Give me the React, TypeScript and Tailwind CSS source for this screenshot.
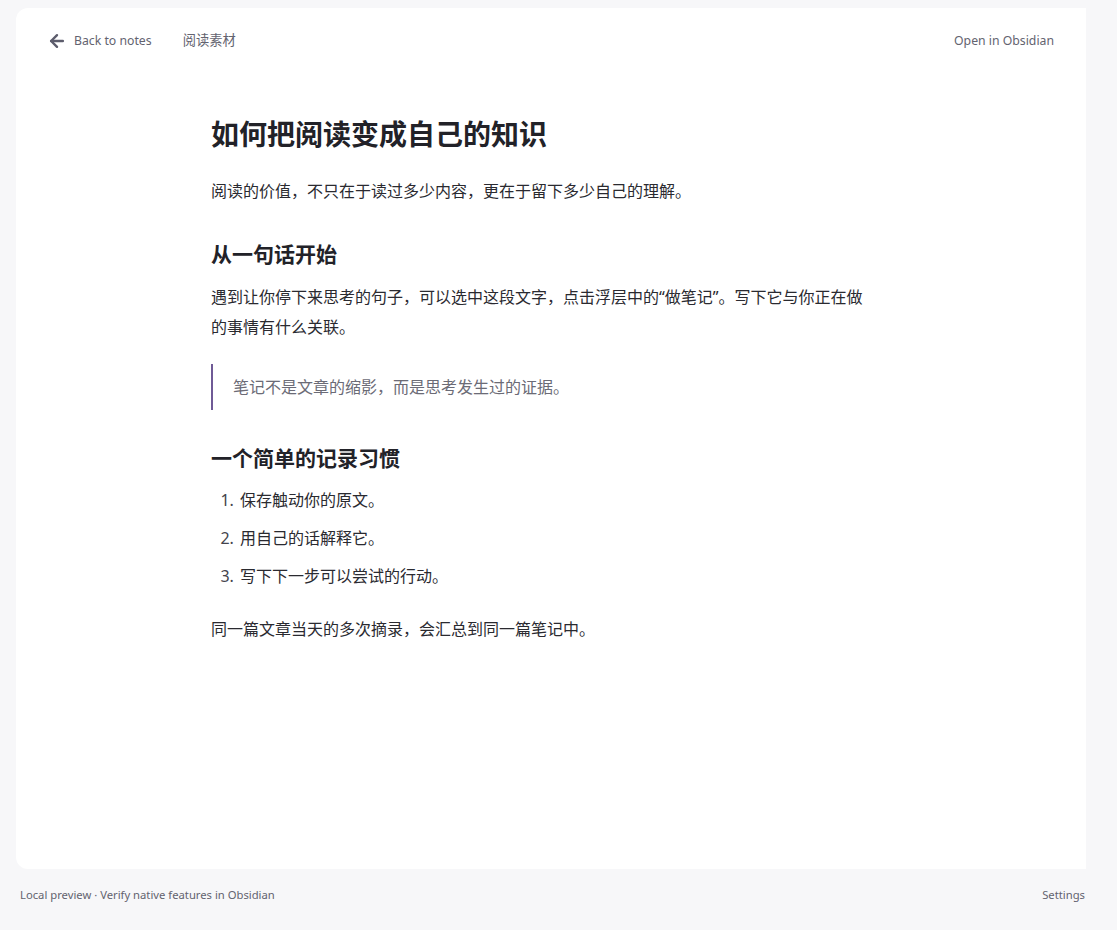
import { ArrowLeft } from 'lucide-react';

const font = { fontFamily: '"Noto Sans", "Noto Sans CJK SC", sans-serif' };

function TopBar() {
  return (
    <header className="flex h-[66px] items-center justify-between pl-[31px] pr-[32px] text-[12.25px] text-[#63636f]">
      <div className="flex items-center">
        <ArrowLeft size={20} strokeWidth={2.9} className="text-[#5c5c6c]" />
        <span className="ml-[7px]">Back to notes</span>
        <span className="ml-[31px] text-[13.25px]">阅读素材</span>
      </div>
      <span>Open in Obsidian</span>
    </header>
  );
}

function Article() {
  return (
    <article className="ml-[195px] w-[660px] pt-[34px] text-[16px] text-[#2a2a30]">
      <h1 className="text-[28px] font-bold leading-[52px] text-[#222228]">如何把阅读变成自己的知识</h1>
      <p className="mt-[16px] leading-[30px]">阅读的价值，不只在于读过多少内容，更在于留下多少自己的理解。</p>
      <h2 className="mt-[30px] text-[21px] font-bold leading-[36px] text-[#222228]">从一句话开始</h2>
      <p className="mt-[10px] leading-[30px]">
        遇到让你停下来思考的句子，可以选中这段文字，点击浮层中的“做笔记”。写下它与你正在做的事情有什么关联。
      </p>
      <blockquote className="mt-[22px] border-l-2 border-[#6f5a96] py-[8px] pl-[20px] leading-[30px] text-[#6b6b76]">
        笔记不是文章的缩影，而是思考发生过的证据。
      </blockquote>
      <h2 className="mt-[30px] text-[21px] font-bold leading-[36px] text-[#222228]">一个简单的记录习惯</h2>
      <ol className="mt-[9px] flex list-decimal flex-col gap-[8px] pl-[27px] leading-[30px] marker:text-[#44444c]">
        <li className="pl-[2px]">保存触动你的原文。</li>
        <li className="pl-[2px]">用自己的话解释它。</li>
        <li className="pl-[2px]">写下下一步可以尝试的行动。</li>
      </ol>
      <p className="mt-[23px] leading-[30px]">同一篇文章当天的多次摘录，会汇总到同一篇笔记中。</p>
    </article>
  );
}

export default function App() {
  return (
    <div className="flex h-[930px] flex-col bg-[#f7f7f9] pl-4 pr-[31px] pt-2" style={font}>
      <main className="h-[861px] rounded-l-[12px] bg-white">
        <TopBar />
        <Article />
      </main>
      <footer className="flex h-[52px] items-center justify-between pl-[4px] pr-px text-[11.25px] text-[#63636f]">
        <span>Local preview · Verify native features in Obsidian</span>
        <span>Settings</span>
      </footer>
    </div>
  );
}
